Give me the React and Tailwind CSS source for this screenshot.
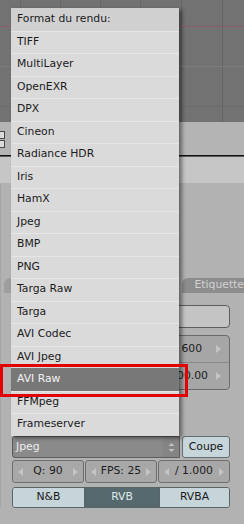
import React from 'react';

const formats = [
  'TIFF', 'MultiLayer', 'OpenEXR', 'DPX', 'Cineon', 'Radiance HDR', 'Iris', 'HamX', 'Jpeg',
  'BMP', 'PNG', 'Targa Raw', 'Targa', 'AVI Codec', 'AVI Jpeg', 'AVI Raw', 'FFMpeg', 'Frameserver',
];

function TriLeft() {
  return (
    <svg width="5" height="8" viewBox="0 0 5 8">
      <path d="M5 0 L0 4 L5 8 Z" fill="#c4c4c4" />
    </svg>
  );
}

function TriRight() {
  return (
    <svg width="5" height="8" viewBox="0 0 5 8">
      <path d="M0 0 L5 4 L0 8 Z" fill="#c4c4c4" />
    </svg>
  );
}

function UpDown() {
  return (
    <svg width="7" height="11" viewBox="0 0 7 11">
      <path d="M0.5 4 L3.5 1 L6.5 4 Z" fill="#c2c2c2" />
      <path d="M0.5 7 L3.5 10 L6.5 7 Z" fill="#c2c2c2" />
    </svg>
  );
}

function NumField({ label, className }) {
  return (
    <div className={'h-full flex items-center justify-between px-[5px] bg-[#a8a8a8] border border-[#6e6e6e] rounded-[3px] ' + className}>
      <TriLeft />
      <span className="text-[#1c1c1c]">{label}</span>
      <TriRight />
    </div>
  );
}

export default function App() {
  return (
    <div
      className="relative w-[244px] h-[524px] overflow-hidden bg-[#b2b2b2] text-[10.8px] leading-none"
      style={{ fontFamily: '"DejaVu Sans", "Liberation Sans", sans-serif' }}
    >
      {/* vue 3D, grille */}
      <div className="relative h-[122px] bg-[#727272]">
        <div className="absolute top-0 bottom-0 left-[20px] w-px bg-[#676767]" />
        <div className="absolute top-0 bottom-0 left-[60px] w-px bg-[#676767]" />
        <div className="absolute top-0 bottom-0 left-[100px] w-px bg-[#676767]" />
        <div className="absolute top-0 bottom-0 left-[140px] w-px bg-[#676767]" />
        <div className="absolute top-0 bottom-0 left-[181px] w-px bg-[#646464]" />
        <div className="absolute top-0 bottom-0 left-[222px] w-px bg-[#646464]" />
        <div className="absolute left-0 right-0 top-[66px] h-px bg-[#7c7c7c]" />
        <div className="absolute left-0 right-0 top-[106px] h-px bg-[#6a6a6a]" />
        <div className="absolute left-0 right-0 top-[26px] h-px bg-[#8a5d64]" />
      </div>

      {/* bandeau */}
      <div className="h-[33px] bg-[#b4b4b4] pt-[9px] flex flex-col gap-px">
        <div className="w-[5px] h-[8px] bg-[#dadada] border border-l-0 border-[#4a4a4a]" />
        <div className="w-[5px] h-[8px] bg-[#dadada] border border-l-0 border-[#4a4a4a]" />
      </div>
      <div className="h-px bg-[#111111]" />
      <div className="h-px bg-[#5a5a5a]" />
      <div className="h-[26px] bg-[#c6c6c6]" />

      {/* panneau */}
      <div className="pt-[95px] pl-[3px] border-l border-[#a6a6a6]">
        <div className="flex h-[15px] items-end">
          <div className="w-[176px] h-full rounded-t-[6px] bg-[#9e9e9e]" />
          <div className="ml-[6px] flex-1 h-full rounded-tl-[6px] bg-[#8d8d8d] pl-[12px] flex items-center text-[#d2d2d2]">
            Etiquette
          </div>
        </div>

        <div className="ml-[8px] w-[218px]">
          <div className="mt-[12px] h-[23px] rounded-[4px] bg-[#c4c4c4] border border-[#5e5e5e]" />

          <div className="mt-[7px] h-[55px] rounded-[4px] bg-[#a6a6a6] border border-[#6a6a6a] flex flex-col text-[#1c1c1c]">
            <div className="flex-1 flex items-center justify-end pr-[8px] gap-[14px] border-b border-[#8a8a8a]">
              <span>600</span>
              <TriRight />
            </div>
            <div className="flex-1 flex items-center justify-end pr-[8px] gap-[8px]">
              <span>00.00</span>
              <TriRight />
            </div>
          </div>

          <div className="mt-[46px] h-[22px] flex gap-[2px]">
            <div className="w-[168px] h-full flex items-center justify-between bg-[#8a8a8a] border border-[#5c5c5c] rounded-l-[3px] pl-[3px]">
              <span className="text-[#ececec]">Jpeg</span>
              <div className="h-full w-[16px] flex items-center justify-center bg-[#848484]">
                <UpDown />
              </div>
            </div>
            <div className="flex-1 h-full flex items-center justify-center bg-[#c7d6da] border border-[#656c6e] rounded-[3px] text-[#151515]">
              Coupe
            </div>
          </div>

          <div className="mt-[2px] h-[23px] flex gap-[1px]">
            <NumField label="Q: 90" className="w-[72px]" />
            <NumField label="FPS: 25" className="w-[72px]" />
            <NumField label="/ 1.000" className="flex-1" />
          </div>

          <div className="mt-[4px] h-[21px] flex border border-[#5a6466] rounded-[3px] overflow-hidden">
            <div className="w-[72px] flex items-center justify-center bg-[#c5d5d9] text-[#1a1a1a] border-r border-[#5a6466]">N&amp;B</div>
            <div className="w-[74px] flex items-center justify-center bg-[#56696e] text-[#dfe9ea]">RVB</div>
            <div className="flex-1 flex items-center justify-center bg-[#c5d5d9] text-[#1a1a1a] border-l border-[#5a6466]">RVBA</div>
          </div>
        </div>
      </div>

      {/* menu déroulant */}
      <div className="absolute left-[11px] top-[8px] w-[168px] bg-[#dadada] shadow-[3px_2px_4px_rgba(0,0,0,0.45)] text-[#1b1b1b]">
        <div className="h-[22.5px] flex items-center pl-[6px] bg-[#d0d0d0]">Format du rendu:</div>
        {formats.map((f) => (
          <div
            key={f}
            className={
              f === 'AVI Raw'
                ? 'h-[22.5px] flex items-center pl-[6px] bg-[#787878] text-[#f2f2f2]'
                : 'h-[22.5px] flex items-center pl-[6px] border-t border-[#e6e6e6]'
            }
          >
            {f}
          </div>
        ))}
      </div>

      {/* cadre rouge */}
      <div className="absolute left-0 top-[364px] w-[188px] h-[33px] border-[3px] border-[#e30000]" />
    </div>
  );
}
